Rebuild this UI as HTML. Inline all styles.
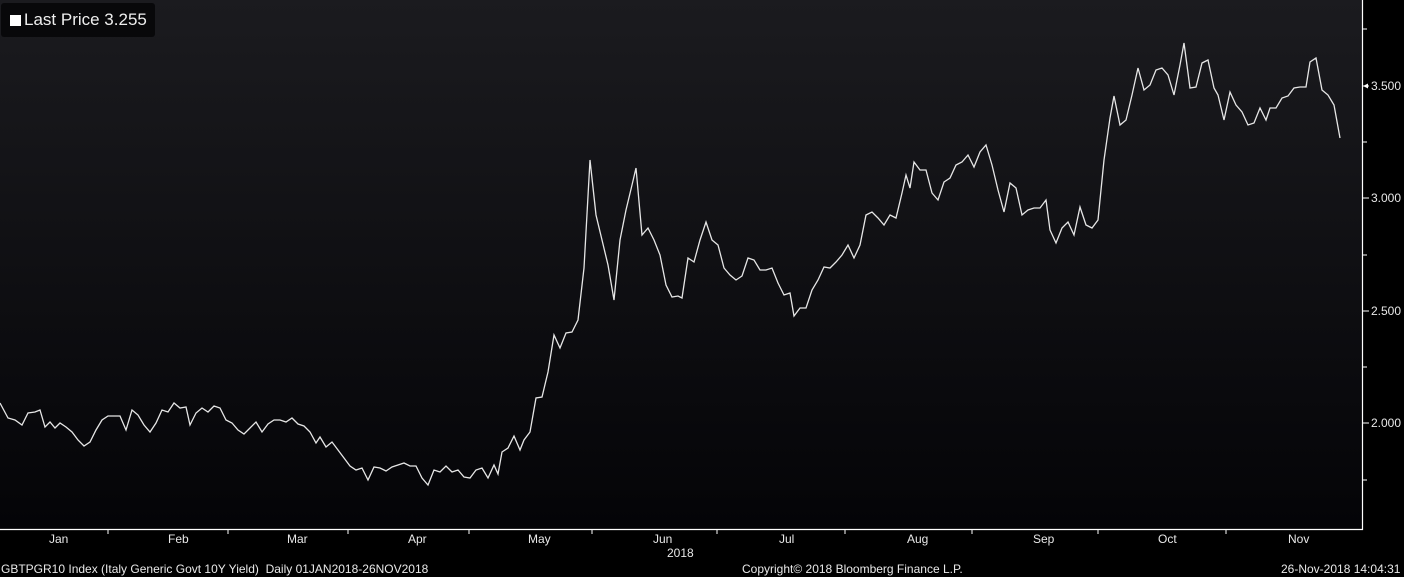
<!DOCTYPE html>
<html><head><meta charset="utf-8"><style>
html,body{margin:0;padding:0;background:#000;width:1404px;height:577px;overflow:hidden;font-family:"Liberation Sans",sans-serif;color:#e8e8e8}
.t{position:absolute;font-size:12px;white-space:nowrap}
#legend{position:absolute;left:1px;top:3px;width:154px;height:34px;background:#08080a;border-radius:3px;font-size:17px;color:#eee;line-height:34px}
#legend span{display:inline-block;width:11px;height:11px;background:#fff;margin:0 3px 0 9px;vertical-align:-1px}
</style></head><body>
<svg width="1404" height="577" style="position:absolute;left:0;top:0">
<defs><linearGradient id="g" x1="0" y1="0" x2="0" y2="1"><stop offset="0" stop-color="#1b1b1f"/><stop offset="1" stop-color="#040407"/></linearGradient></defs>
<rect x="0" y="0" width="1362" height="529" fill="url(#g)"/>
<path d="M1362.5 0V529.5H0" stroke="#fff" stroke-width="1.2" fill="none"/>
<g stroke="#fff" stroke-width="1">
<path d="M1362 29h5M1362 86h7M1362 142h5M1362 198h7M1362 255h5M1362 311h7M1362 367h5M1362 423h7M1362 480h5"/>
<path d="M108 530v4M228 530v4M348 530v4M469 530v4M592 530v4M717 530v4M845 530v4M972 530v4M1098 530v4M1226 530v4"/>
</g>
<polyline fill="none" stroke="#e6e6e6" stroke-width="1.3" points="0,403 8,418 15,420 22,425 28,413 35,412 40,410 45,427 50,422 55,428 60,423 66,427 72,432 78,440 84,446 90,442 96,430 102,420 108,416 114,416 120,416 126,430 132,410 138,415 144,425 150,432 156,423 162,410 168,412 174,403 180,408 186,407 190,425 196,413 202,408 208,412 214,406 220,408 226,420 232,423 238,430 244,434 250,428 256,422 262,432 268,424 274,420 280,420 286,422 292,418 298,424 304,426 310,432 316,443 320,437 326,447 332,442 338,450 344,458 350,466 356,470 362,468 368,480 374,467 380,468 386,471 392,467 398,465 404,463 410,466 416,466 422,478 428,485 434,470 440,472 446,466 452,472 458,470 464,477 470,478 476,470 482,468 488,478 494,465 498,474 502,452 508,448 514,436 520,450 524,440 530,432 536,398 542,397 548,372 554,335 560,348 566,333 572,332 578,320 584,268 590,160 596,215 602,240 608,265 614,300 620,240 626,210 632,185 636,168 642,235 648,228 654,240 660,255 666,285 672,297 678,296 682,298 688,258 694,262 700,240 706,222 712,240 718,245 724,268 730,275 736,280 742,276 748,258 754,260 760,270 766,270 772,268 778,283 784,295 790,293 794,316 800,308 806,308 812,290 818,280 824,267 830,268 836,262 842,255 848,245 854,258 860,245 866,215 872,212 878,218 884,225 890,215 896,218 902,193 906,175 910,188 914,162 920,170 926,170 932,193 938,200 944,182 950,178 956,165 962,162 968,155 974,167 980,152 986,145 992,165 998,190 1004,212 1010,183 1016,188 1022,215 1028,210 1034,208 1040,208 1046,200 1050,230 1056,243 1062,228 1068,222 1074,235 1080,207 1086,225 1092,228 1098,220 1104,160 1110,118 1114,96 1120,125 1126,120 1132,95 1138,68 1144,90 1150,85 1156,70 1162,68 1168,75 1174,95 1180,65 1184,43 1190,88 1196,87 1202,63 1208,60 1214,88 1218,95 1224,120 1230,92 1236,105 1242,112 1248,125 1254,123 1260,108 1266,120 1270,108 1276,108 1282,98 1288,96 1294,88 1300,87 1306,87 1310,62 1316,58 1322,90 1328,95 1334,105 1340,138"/>
<polygon points="1363,86 1368,83.5 1368,88.5" fill="#fff"/>
</svg>
<div id="legend"><span></span>Last Price 3.255</div>
<div class="t" style="left:1371px;top:79px">3.500</div>
<div class="t" style="left:1371px;top:191px">3.000</div>
<div class="t" style="left:1371px;top:304px">2.500</div>
<div class="t" style="left:1371px;top:416px">2.000</div>
<div class="t" style="left:49px;top:532px">Jan</div>
<div class="t" style="left:168px;top:532px">Feb</div>
<div class="t" style="left:287px;top:532px">Mar</div>
<div class="t" style="left:408px;top:532px">Apr</div>
<div class="t" style="left:528px;top:532px">May</div>
<div class="t" style="left:653px;top:532px">Jun</div>
<div class="t" style="left:779px;top:532px">Jul</div>
<div class="t" style="left:907px;top:532px">Aug</div>
<div class="t" style="left:1033px;top:532px">Sep</div>
<div class="t" style="left:1158px;top:532px">Oct</div>
<div class="t" style="left:1288px;top:532px">Nov</div>
<div class="t" style="left:667px;top:546px">2018</div>
<div class="t" style="left:1px;top:562px;font-size:12px">GBTPGR10 Index (Italy Generic Govt 10Y Yield)&nbsp; Daily 01JAN2018-26NOV2018</div>
<div class="t" style="left:742px;top:562px;font-size:12px">Copyright© 2018 Bloomberg Finance L.P.</div>
<div class="t" style="left:1281px;top:562px;font-size:12px">26-Nov-2018 14:04:31</div>
</body></html>
